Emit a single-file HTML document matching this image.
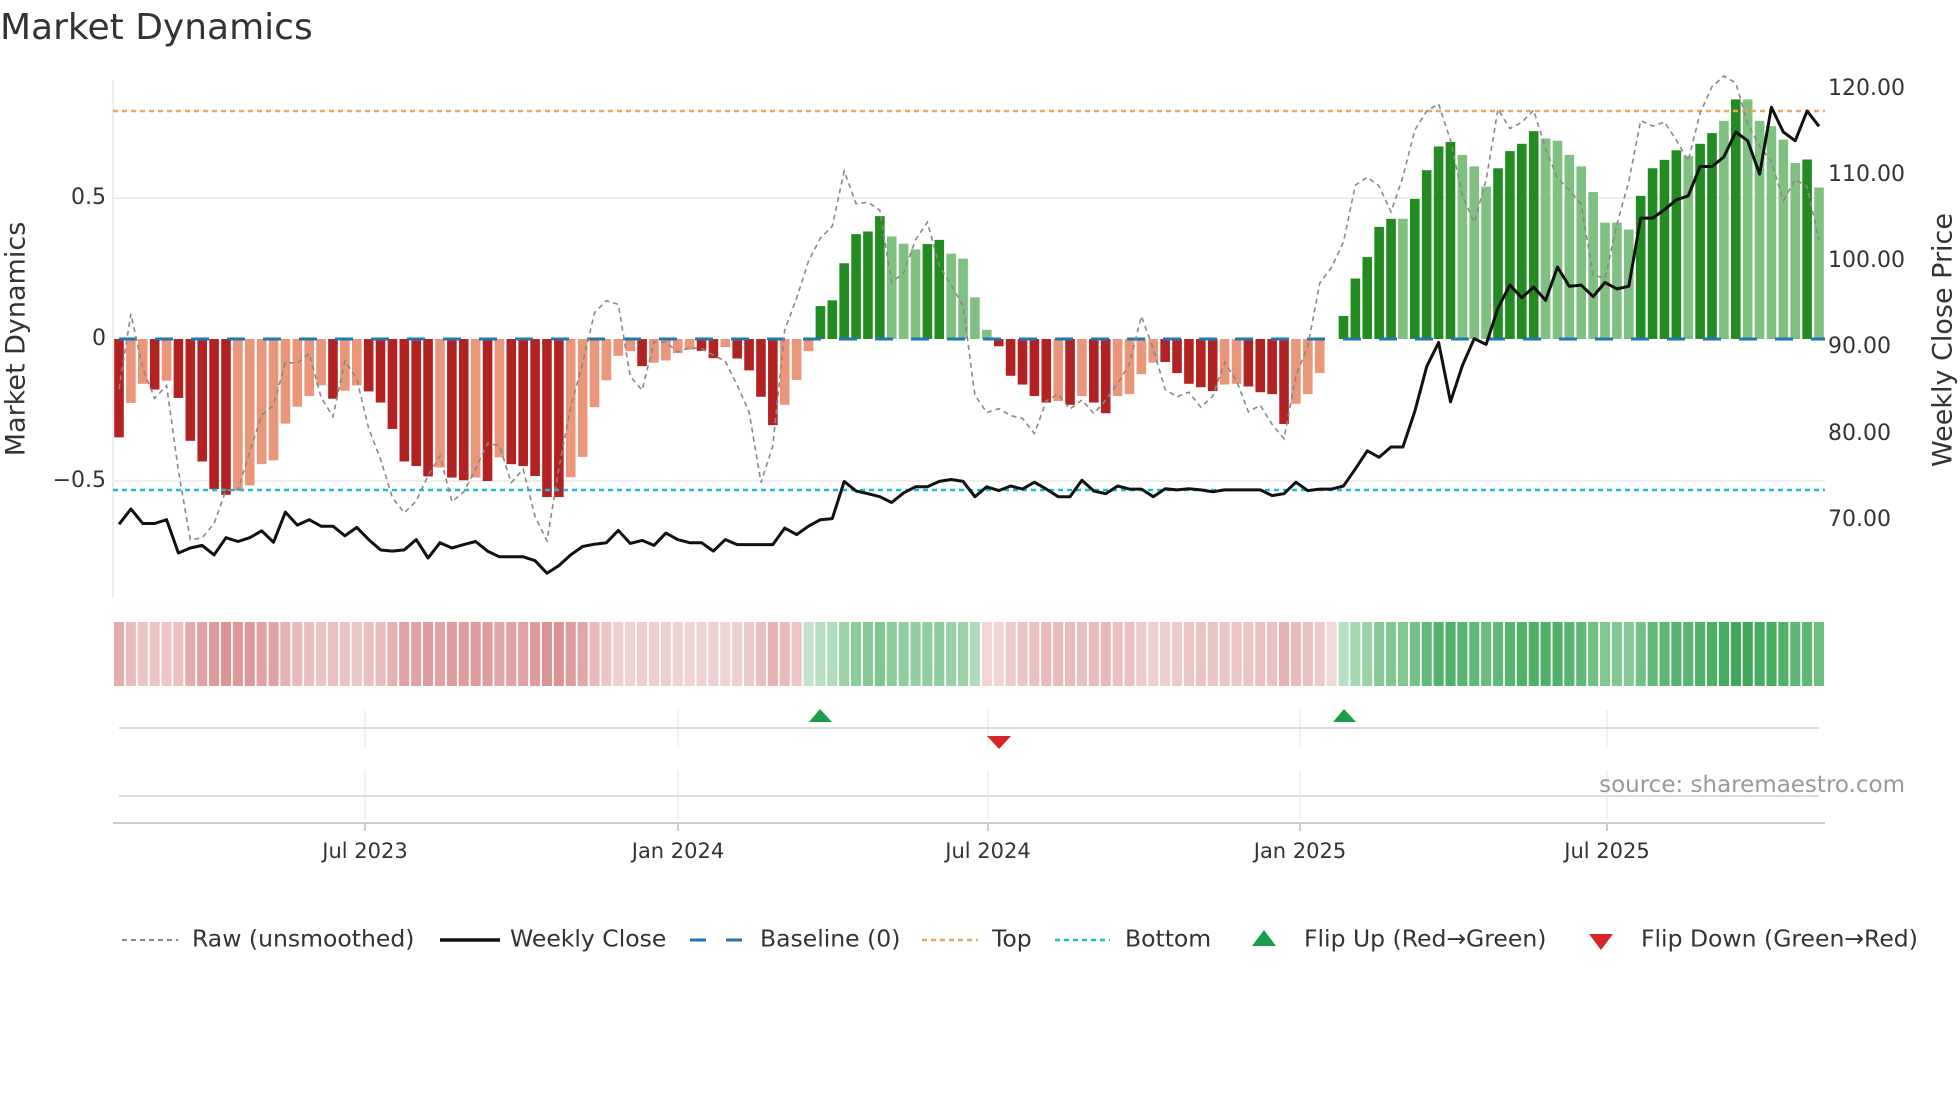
<!DOCTYPE html>
<html><head><meta charset="utf-8">
<style>
html,body{margin:0;padding:0;background:#fff;}
svg text{font-family:"DejaVu Sans","Liberation Sans",sans-serif;}
</style></head>
<body>
<svg id="s" width="1960" height="1102" xmlns="http://www.w3.org/2000/svg">
<rect width="1960" height="1102" fill="#fff"/>
<text x="0" y="39" font-size="36" fill="#333">Market Dynamics</text>
<g id="g"></g>
<text x="17" y="339" font-size="27" fill="#333" text-anchor="middle" transform="rotate(-90 17 339)" dominant-baseline="middle">Market Dynamics</text>
<text x="1944" y="340" font-size="27" fill="#333" text-anchor="middle" transform="rotate(-90 1944 340)" dominant-baseline="middle">Weekly Close Price</text>
<g font-size="22" fill="#333" dominant-baseline="middle">
<text x="106" y="198" text-anchor="end">0.5</text>
<text x="106" y="339" text-anchor="end">0</text>
<text x="106" y="481" text-anchor="end">−0.5</text>
<text x="1828" y="89">120.00</text>
<text x="1828" y="175">110.00</text>
<text x="1828" y="261">100.00</text>
<text x="1828" y="347">90.00</text>
<text x="1828" y="434">80.00</text>
<text x="1828" y="520">70.00</text>
</g>
<g font-size="21" fill="#333" text-anchor="middle">
<text x="365" y="858">Jul 2023</text>
<text x="678" y="858">Jan 2024</text>
<text x="988" y="858">Jul 2024</text>
<text x="1300" y="858">Jan 2025</text>
<text x="1607" y="858">Jul 2025</text>
</g>
<text x="1905" y="792" font-size="23" fill="#999" text-anchor="end">source: sharemaestro.com</text>
<g font-size="23.5" fill="#333" dominant-baseline="middle">
<line x1="122" y1="940" x2="178" y2="940" stroke="#888" stroke-width="2" stroke-dasharray="5,4"/>
<text x="192" y="940">Raw (unsmoothed)</text>
<line x1="440" y1="940" x2="500" y2="940" stroke="#111" stroke-width="3.5"/>
<text x="510" y="940">Weekly Close</text>
<line x1="690" y1="940" x2="745" y2="940" stroke="#1f77b4" stroke-width="3" stroke-dasharray="16,20"/>
<text x="760" y="940">Baseline (0)</text>
<line x1="922" y1="940" x2="978" y2="940" stroke="#f4a460" stroke-width="2.5" stroke-dasharray="5,4"/>
<text x="992" y="940">Top</text>
<line x1="1055" y1="940" x2="1110" y2="940" stroke="#17becf" stroke-width="2.5" stroke-dasharray="5,4"/>
<text x="1125" y="940">Bottom</text>
<polygon points="1252,946 1276,946 1264,930" fill="#1a9e4a"/>
<text x="1304" y="940">Flip Up (Red→Green)</text>
<polygon points="1589,934 1613,934 1601,950" fill="#d62728"/>
<text x="1641" y="940">Flip Down (Green→Red)</text>
</g>
</svg>
<script>
var ns="http://www.w3.org/2000/svg",g=document.getElementById('g');
function el(t,a){var e=document.createElementNS(ns,t);for(var k in a)e.setAttribute(k,a[k]);g.appendChild(e);return e;}
var z1=[[1143,1],[1053,0],[1003,0],[1018,1],[995,0],[1040,1],[1152,1],[1206,1],[1278,1],[1293,1],[1280,0],[1268,0],[1213,0],[1203,0],[1107,0],[1063,0],[1035,0],[1007,0],[1042,1],[1021,0],[1007,0],[1023,1],[1052,1],[1121,1],[1206,1],[1218,1],[1245,1],[1222,0],[1248,1],[1255,1],[1248,0],[1257,1],[1195,0],[1213,1],[1218,1],[1244,1],[1299,1],[1299,1],[1247,0],[1194,0],[1064,0],[994,0],[930,0],[918,0],[957,1],[948,0],[942,0],[923,0],[914,0],[917,1],[936,1],[907,0],[937,1],[968,1],[1037,1],[1111,1],[1058,0],[993,0],[918,0],[800,1],[785,1],[688,1],[612,1],[605,1],[565,1],[618,0],[637,0],[652,0],[638,1],[627,1],[663,0],[676,0],[777,0]];
var z2=[[862,0],[905,1],[982,1],[1005,1],[1035,1],[1052,1],[1048,0],[1058,1],[1035,0],[1052,1],[1080,1],[1035,0],[1030,0],[978,0],[948,0],[946,1],[975,1],[1003,1],[1012,1],[1022,1],[1005,0],[1003,0],[1010,1],[1025,1],[1030,1],[1108,1],[1055,0],[1030,0],[975,0],[886,0],[826,1],[728,1],[672,1],[593,1],[572,1],[572,0],[520,1],[445,1],[383,1],[371,1],[405,0],[435,0],[488,0],[440,1],[395,1],[376,1],[343,1],[362,0],[368,0],[405,0],[435,0],[502,0],[582,0],[582,0],[600,0],[512,1],[440,1],[418,1],[393,1],[408,0],[376,1],[348,1],[316,0],[260,1],[260,0],[316,0],[330,0],[365,0],[426,0],[417,1],[490,0]];
var bars=z1.concat(z2);var N=bars.length;
var vals=bars.map(function(b){return -(b[0]-886)/742;});
function X(i){return 119+i*(1700/(N-1));}
function Y(v){return 339-v*284;}
[198,481].forEach(function(y){el('line',{x1:113,x2:1825,y1:y,y2:y,stroke:'#eee','stroke-width':2});});
el('line',{x1:113,x2:113,y1:80,y2:598,stroke:'#eee','stroke-width':2});
for(var i=0;i<N;i++){var v=vals[i];if(Math.abs(v)<0.005)continue;var pos=v>0,d=bars[i][1];
var c=pos?(d?'#228b22':'#80c080'):(d?'#b22222':'#e9967a');
var y=Y(v);el('rect',{x:X(i)-4.8,width:9.6,y:Math.min(y,339),height:Math.abs(y-339),fill:c});}
el('line',{x1:113,x2:1825,y1:111,y2:111,stroke:'#f4a460','stroke-width':2.5,'stroke-dasharray':'5,4'});
el('line',{x1:113,x2:1825,y1:490,y2:490,stroke:'#17becf','stroke-width':2.5,'stroke-dasharray':'5,4'});
el('line',{x1:119,x2:1825,y1:339,y2:339,stroke:'#1f77b4','stroke-width':3,'stroke-dasharray':'18,18'});
var p='';for(var i=0;i<N;i++){var a=vals[Math.max(0,i-1)],b=vals[Math.min(N-1,i+1)];var r=vals[i]+1.4*(b-a)+0.05*Math.sin(i*1.7);p+=(i?'L':'M')+X(i).toFixed(1)+','+Y(r).toFixed(1);}
el('path',{d:p,fill:'none',stroke:'#888','stroke-width':1.6,'stroke-dasharray':'5,4'});
var c1=[1370,1330,1368,1368,1358,1445,1432,1425,1450,1405,1415,1405,1387,1417,1338,1372,1358,1375,1375,1400,1378,1410,1437,1440,1437,1410,1458,1418,1432,1423,1415,1440,1455,1455,1455,1465,1498,1478,1450,1428,1422,1418,1386,1420,1412,1425,1393,1410,1418,1418,1440,1410,1423,1423,1423,1423,1380,1397,1375,1358,1355,1258,1283,1290,1298,1313,1288,1272,1272,1258,1253,1258,1298];
var c2=[1272,1282,1270,1278,1260,1278,1298,1298,1255,1283,1290,1270,1278,1278,1298,1277,1280,1277,1280,1285,1280,1280,1280,1280,1295,1290,1260,1282,1278,1278,1270,1225,1178,1195,1168,1168,1075,958,895,1050,955,885,900,805,745,778,750,785,698,748,745,775,738,755,748,570,570,548,522,512,435,435,410,345,368,455,280,345,368,290,330];
var cl=c1.concat(c2);p='';for(var i=0;i<cl.length;i++){p+=(i?'L':'M')+X(i).toFixed(1)+','+(cl[i]/2.613).toFixed(1);}
el('path',{d:p,fill:'none',stroke:'#111','stroke-width':3,'stroke-linejoin':'round'});
var w=1712/N;
for(var i=0;i<N;i++){var v=vals[i];var sg=(i>=58&&i<=72)||i>=103;var m=Math.min(1,Math.abs(v)/0.8);
var c=sg?'rgba(40,160,70,'+(0.25+0.65*m).toFixed(2)+')':'rgba(190,60,60,'+(0.2+0.5*m).toFixed(2)+')';
el('rect',{x:(113+i*w+0.9).toFixed(1),y:622,width:(w-1.8).toFixed(1),height:64,fill:c});}
[365,678,988,1300,1607].forEach(function(x){el('line',{x1:x,x2:x,y1:710,y2:747,stroke:'#eee','stroke-width':1.5});el('line',{x1:x,x2:x,y1:770,y2:820,stroke:'#eee','stroke-width':1.5});el('line',{x1:x,x2:x,y1:823,y2:831,stroke:'#bbb','stroke-width':1.5});});
el('line',{x1:119,x2:1819,y1:728,y2:728,stroke:'#ddd','stroke-width':2});
el('line',{x1:119,x2:1819,y1:796,y2:796,stroke:'#ddd','stroke-width':2});
el('line',{x1:113,x2:1825,y1:823,y2:823,stroke:'#ccc','stroke-width':2});
el('polygon',{points:'809,722 832,722 820,709',fill:'#1a9e4a'});
el('polygon',{points:'1333,722 1356,722 1344,709',fill:'#1a9e4a'});
el('polygon',{points:'987,736 1011,736 999,749',fill:'#d62728'});
</script>
</body></html>
